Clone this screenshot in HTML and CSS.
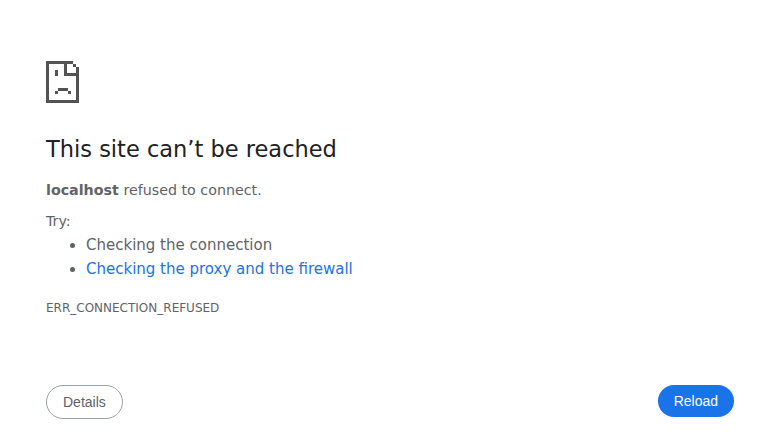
FILE: index.html
```html
<!DOCTYPE html>
<html lang="en">
<head>
<meta charset="utf-8">
<title>localhost</title>
<link rel="stylesheet" href="styles.css">
</head>
<body>
<main class="interstitial">
  <svg class="icon" viewBox="0 0 33 42" shape-rendering="crispEdges" aria-hidden="true">
    <path fill="#535353" d="M0 0h27v3H3v36h27V15H18V3h3v9h9V6h3v36H0zM27 3h3v3h-3zM9 9h3v6H9zM12 27h10v3H12zM9 30h3v3H9zM22 30h3v3h-3z"/>
  </svg>
  <h1>This site can’t be reached</h1>
  <p class="summary"><strong>localhost</strong> refused to connect.</p>
  <div class="suggestions">
    <p>Try:</p>
    <ul>
      <li>Checking the connection</li>
      <li><a href="#buttons">Checking the proxy and the firewall</a></li>
    </ul>
  </div>
  <div class="error-code">ERR_CONNECTION_REFUSED</div>
  <div class="buttons" id="buttons">
    <button class="button secondary">Details</button>
    <button class="button primary">Reload</button>
  </div>
</main>
</body>
</html>
```
FILE: styles.css
```css
body {
  margin: 0;
  background: #fff;
  color: #5f6368;
  font-family: "DejaVu Sans", sans-serif;
  font-size: 15px;
}
.interstitial {
  display: flow-root;
  padding: 61px 46px 0;
}
.icon {
  display: block;
  width: 33px;
  height: 42px;
}
h1 {
  margin: 31px 0 16px;
  color: #202124;
  font-size: 22.5px;
  font-weight: 500;
  line-height: 30px;
}
.summary {
  margin: 0;
  font-size: 14.25px;
  line-height: 21px;
}
.suggestions {
  margin-top: 10px;
}
.suggestions p {
  margin: 0;
  font-size: 14.25px;
  line-height: 21px;
}
ul {
  margin: 1px 0 0;
  padding-left: 40px;
  line-height: 24px;
}
a {
  color: #1a73e8;
  text-decoration: none;
}
.error-code {
  margin-top: 19px;
  font-size: 12px;
  line-height: 16px;
}
.buttons {
  display: flex;
  justify-content: space-between;
  align-items: flex-start;
  margin-top: 69px;
}
.button {
  box-sizing: border-box;
  height: 32px;
  padding: 0 16px;
  border: 0;
  border-radius: 20px;
  font: 14px "Liberation Sans", sans-serif;
}
.primary {
  background: #1a73e8;
  color: #fff;
}
.secondary {
  height: 34px;
  border: 1px solid #9aa0a6;
  background: #fff;
  color: #5f6368;
}
```
